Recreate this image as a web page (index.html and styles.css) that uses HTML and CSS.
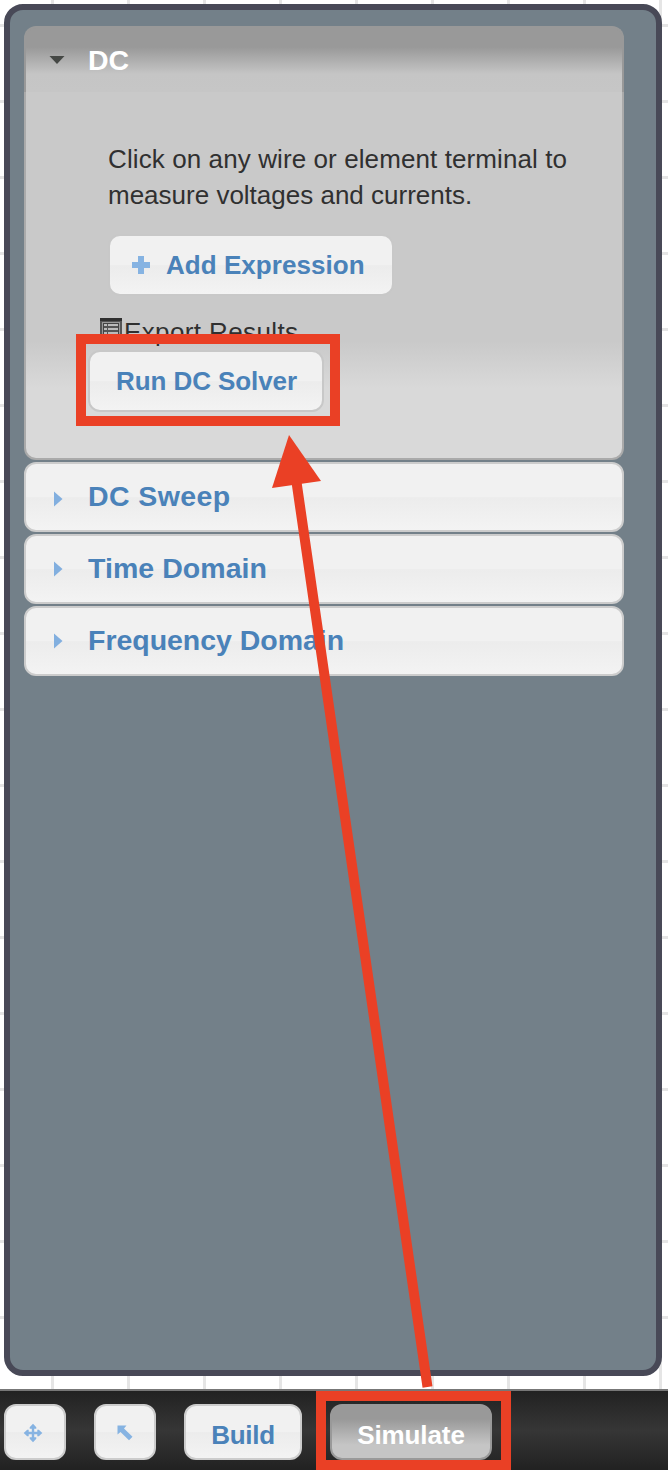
FILE: index.html
```html
<!DOCTYPE html>
<html lang="en">
<head>
<meta charset="utf-8">
<title>Circuit simulation</title>
<link rel="stylesheet" href="styles.css">
</head>
<body>
<div class="workspace">
  <main class="panel">
    <section class="accordion">
      <h3 class="head head-open"><svg class="caret" viewBox="0 0 16 16"><path d="M.5 4h15L8 12z" fill="#454845"/></svg><span class="t-dc">DC</span></h3>
      <div class="content">
        <p class="hint"><span class="line1">Click on any wire or element terminal to</span><br><span class="line2">measure voltages and currents.</span></p>
        <button class="btn add"><svg class="plus" viewBox="0 0 18 18"><path d="M6 0h6v6h6v6h-6v6H6v-6H0V6h6z" fill="#86b3e2"/></svg><span class="t-add">Add Expression</span></button>
        <div class="export">
          <svg class="sheet" viewBox="0 0 24 26"><path d="M1 0h22v26H1z" fill="#555"/><path d="M1 0h22v3H1z" fill="#303030"/><path d="M3 4h18v21H3z" fill="#999"/><path d="M4 5h16v19H4z" fill="#444"/><path d="M5 6h14v17H5z" fill="#555"/><path d="M5 6h3v2H5zm4 0h10v2H9zM5 10h3v2H5zm4 0h10v2H9zM5 14h3v2H5zm4 0h10v2H9zM5 18h3v2H5zm4 0h10v2H9z" fill="#bbb"/></svg><span class="t-export">Export Results</span>
        </div>
        <button class="btn run"><span class="t-run">Run DC Solver</span></button>
      </div>
      <h3 class="head"><svg class="caret low" viewBox="0 0 16 16"><path d="M5 .5v15L13.5 8z" fill="#82afdf"/></svg><span class="t-sweep">DC Sweep</span></h3>
      <h3 class="head"><svg class="caret" viewBox="0 0 16 16"><path d="M5 .5v15L13.5 8z" fill="#82afdf"/></svg><span class="t-time">Time Domain</span></h3>
      <h3 class="head"><svg class="caret" viewBox="0 0 16 16"><path d="M5 .5v15L13.5 8z" fill="#82afdf"/></svg><span class="t-freq">Frequency Domain</span></h3>
    </section>
  </main>
  <footer class="toolbar">
    <button class="tool"><svg class="move" viewBox="0 0 20 20"><path d="M10 .7l3.300 3.500v1.500H11.200v3.100h3.100V6.700h1.500L19.300 10l-3.500 3.300h-1.500v-2.100h-3.100v3.100h2.100v1.500L10 19.300l-3.300-3.500v-1.500h2.100v-3.100H5.700v2.100H4.200L.7 10l3.500-3.300h1.500v2.100h3.100V5.700H6.700V4.200z" fill="#86b3e2"/></svg></button>
    <button class="tool"><svg class="pointer" viewBox="0 0 18 18"><path d="M1.500 1.500h9L8 4.400 16.500 12.700 13 16.300 4.500 8 1.500 10.500z" fill="#86b3e2"/></svg></button>
    <button class="tool build"><span class="t-build">Build</span></button>
    <button class="tool simulate"><span class="t-sim">Simulate</span></button>
  </footer>
  <svg class="annotations" viewBox="0 0 668 1470">
    <g fill="none" stroke="#ea4025" stroke-width="10"><path d="M81 339h254v82H81zM321 1396h185v69H321zM296.500 482L427.500 1387"/></g>
    <path d="M289 435l32 46-49 7z" fill="#ea4025"/>
  </svg>
</div>
</body>
</html>
```
FILE: styles.css
```css
* { box-sizing: border-box; }
body { margin: 0; font-family: "Liberation Sans", Arial, sans-serif; }
.workspace {
  position: relative;
  display: flex;
  flex-direction: column;
  height: 1470px;
  overflow: hidden;
  padding: 4px 6px 0 4px;
  background-color: #fff;
  background-image:
    linear-gradient(90deg, #e5e5e5 3px, transparent 3px),
    linear-gradient(#e5e5e5 3px, transparent 3px);
  background-size: 76px 76px;
  background-position: 51px 0, 0 24px;
}
.panel {
  height: 1372px;
  flex: none;
  padding: 16px 32px 0 14px;
  border: 6px solid #484957;
  border-radius: 19px;
  background: #738089;
}
.accordion { display: flex; flex-direction: column; gap: 2px; }
.head {
  display: flex;
  align-items: center;
  height: 70px;
  margin: 0;
  padding-left: 23px;
  border: 2px solid #ccc;
  border-radius: 12px;
  background: linear-gradient(#f1f1f1 50%, #ececec 51%, #f3f3f3);
  color: #4a82b9;
  font-size: 28.5px;
  line-height: 32px;
  white-space: nowrap;
}
.head > span { margin-top: -3px; }
.caret { width: 16px; height: 16px; margin: 0 23px 0 0; }
.caret.low { margin-top: 3px; }
.head-open {
  height: 66px;
  border: 2px solid #999;
  border-bottom: 0;
  border-radius: 12px 12px 0 0;
  background: linear-gradient(#999 30%, #c5c5c5 72%, #c6c6c6);
  color: #fff;
}
.head-open > span { margin-top: -1px; }
.head-open .caret { margin-top: 0; }
.t-sweep { letter-spacing: .4px; }
.t-time { letter-spacing: .05px; }
.t-freq { letter-spacing: -.03px; }
.content {
  display: flex;
  flex-direction: column;
  align-items: flex-start;
  height: 368px;
  margin-top: -2px;
  padding: 49px 0 0 82px;
  border: 2px solid #aaa;
  border-top: 0;
  border-radius: 0 0 12px 12px;
  background: linear-gradient(#c9c9c9 0, #c9c9c9 68%, #d9d9d9 81%, #d9d9d9);
  color: #303030;
}
.hint { margin: 0 0 21px; font-size: 26px; line-height: 36px; white-space: nowrap; }
.line1 { letter-spacing: .1px; }
button { margin: 0; font: bold 26px/30px "Liberation Sans", Arial, sans-serif; color: #4a82b9; white-space: nowrap; }
.btn {
  display: flex;
  align-items: center;
  height: 62px;
  padding: 0;
  border: 2px solid #c8c8c8;
  border-radius: 12px;
  background: linear-gradient(#f1f1f1 50%, #ececec 51%, #f3f3f3);
}
.add { width: 286px; padding-left: 22px; }
.plus { width: 18px; height: 18px; margin-right: 16px; }
.t-add { letter-spacing: .05px; }
.export {
  display: flex;
  align-items: center;
  height: 30px;
  margin: 21px 0 3px -9px;
  font-size: 26px;
  line-height: 30px;
  white-space: nowrap;
}
.sheet { width: 24px; height: 26px; margin: -2px 1px 0 0; }
.t-export { letter-spacing: .38px; }
.run { width: 236px; margin-left: -20px; padding-left: 26px; }
.t-run { letter-spacing: -.08px; }
.toolbar {
  display: flex;
  gap: 28px;
  height: 82px;
  margin: 13px -6px 0 -4px;
  padding: 13px 0 0 4px;
  border-top: 2px solid #777;
  background: linear-gradient(#222, #363636 50%, #222 98%);
}
.tool {
  display: flex;
  align-items: center;
  justify-content: center;
  width: 62px;
  height: 56px;
  padding: 0;
  border: 2px solid #ccc;
  border-radius: 12px;
  background: linear-gradient(#f1f1f1 50%, #ececec 51%, #f3f3f3);
}
.tool span { margin-top: 5px; }
.move { width: 20px; height: 20px; margin: 2px 4px 0 0; }
.pointer { width: 18px; height: 18px; margin-top: 2px; }
.build { width: 118px; }
.t-build { letter-spacing: -.3px; }
.simulate { width: 162px; border-color: #999; background: linear-gradient(#999 25%, #c5c5c5 75%); color: #fff; }
.t-sim { letter-spacing: -.1px; }
.annotations { position: absolute; inset: 0; width: 668px; height: 1470px; pointer-events: none; }
```
